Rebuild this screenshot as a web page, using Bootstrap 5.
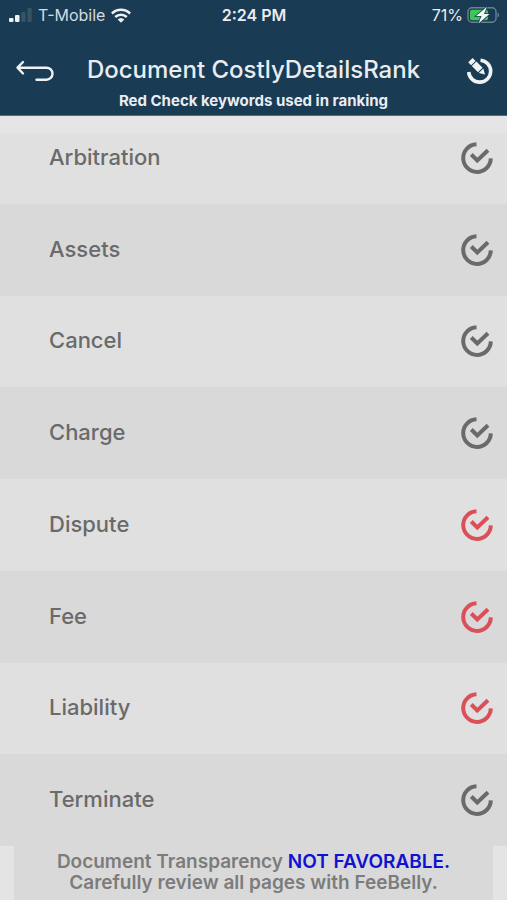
<!DOCTYPE html>
<html lang="en">
<head>
<meta charset="utf-8">
<meta name="viewport" content="width=device-width, initial-scale=1">
<title>Document CostlyDetailsRank</title>
<link href="https://cdn.jsdelivr.net/npm/bootstrap@5.3.0/dist/css/bootstrap.min.css" rel="stylesheet">
<style>
  body { font-family: Inter, "Liberation Sans", sans-serif; background: #e4e4e4; color: #6a6a6a; }
  svg { display: block; flex: none; }
  .app-header { background: #193b53; color: #e9edf1; z-index: 2; border-bottom: 1px solid #536d80; }
  .status-bar { font-size: 16px; line-height: 20px; padding: 5px 8px 0 9px; }
  .status-bar > * { flex: 1 1 0; }
  .carrier { gap: 6px; color: #d3dbe2; }
  .title-bar { padding: 28px 14px 4px; }
  .title-bar h1 { font-size: 24px; line-height: 34px; font-weight: 500; }
  .tool-btn { color: inherit; border: 0; padding: 0; background: none; width: 42px; }
  .title-bar p { font-size: 15px; line-height: 20px; font-weight: 700; padding-top: 4px; }
  .keyword-list { margin-top: -4px; background: linear-gradient(#e7e7e9, #e4e4e5 20px, #e0e0e0 24px, #e0e0e0); }
  .keyword { flex: 1 1 0; padding: 0 13px 0 49px; font-size: 22px; line-height: 30px; font-weight: 500; }
  .keyword span { padding-bottom: 2px; }
  .keyword:nth-child(even) { background: #d9d9d9; }
  .keyword svg { color: #6a6a6a; }
  .keyword input:checked + svg { color: #db5058; }
  .keyword input:focus-visible + svg { outline: 2px solid #193b53; }
  .verdict { background: #d9d9d9; margin: 0 14px; padding: 5px 8px 7px; font-size: 19px; line-height: 21px; font-weight: 600; color: #7c7c7c; }
  .verdict strong { font-weight: 600; color: #1111d0; }
</style>
</head>
<body>
<svg class="d-none" aria-hidden="true">
  <symbol id="check-ring" viewBox="0 0 34 34">
    <path d="M16.5 3.3A13.8 13.8 0 1 0 30.8 17.4" fill="none" stroke="currentColor" stroke-width="4"/>
    <path d="M11.3 13.5l6 6L28 9.3" fill="none" stroke="currentColor" stroke-width="4"/>
  </symbol>
</svg>
<div class="d-flex flex-column min-vh-100">
  <header class="app-header position-relative">
    <div class="status-bar d-flex align-items-center">
      <div class="carrier d-flex align-items-center">
        <svg width="23" height="16" viewBox="0 0 23 16" aria-hidden="true">
          <rect x="0" y="11" width="4.5" height="4" rx="1" fill="#eef1f3"/>
          <rect x="6" y="8" width="4.5" height="7" rx="1" fill="#eef1f3"/>
          <rect x="12.3" y="5" width="4.3" height="10" rx="1" fill="#355567"/>
          <rect x="18.4" y="1" width="4.3" height="14" rx="1" fill="#355567"/>
        </svg>
        <span>T-Mobile</span>
        <svg width="20" height="15" viewBox="0 0 20 15" fill="none" stroke="#eef1f3" stroke-width="2.5" aria-hidden="true">
          <path d="M.9 5.5a13 13 0 0 1 18.2 0M4.2 9a8.4 8.4 0 0 1 11.6 0"/>
          <path d="M6.7 11.4a4.9 4.9 0 0 1 6.6 0L10 14.7z" fill="#eef1f3" stroke="none"/>
        </svg>
      </div>
      <div class="text-center fw-semibold">2:24 PM</div>
      <div class="d-flex align-items-center justify-content-end gap-1">
        <span>71%</span>
        <svg width="32" height="18" viewBox="0 0 32 18" aria-hidden="true">
          <rect x="1" y="1.7" width="28" height="14.6" rx="4" fill="none" stroke="#6c8190" stroke-width="1.4"/>
          <path d="M30.500 6.500c2 .8 2 4.200 0 5z" fill="#6c8190"/>
          <rect x="3" y="3.700" width="18" height="10.600" rx="2" fill="#3fc45a"/>
          <path d="M20 .8L9 10h5.500L11.500 17.500 22.500 8H17z" fill="#f3f6f6" stroke="#193b53" stroke-width="1.500" paint-order="stroke"/>
        </svg>
      </div>
    </div>
    <div class="title-bar">
      <div class="d-flex align-items-center justify-content-between">
        <button class="tool-btn" type="button" aria-label="Back">
          <svg width="42" height="24" viewBox="0 0 42 24" fill="none" stroke="#f0f2f4" stroke-width="2.400" stroke-linecap="round" stroke-linejoin="round">
            <path d="M9 4L3.500 9.700 9 15.500M4 9.700h28.500a5.700 5.700 0 0 1 0 12H22.500"/>
          </svg>
        </button>
        <h1 class="m-0 text-nowrap">Document CostlyDetailsRank</h1>
        <button class="tool-btn d-flex justify-content-end" type="button" aria-label="Edit keywords">
          <svg width="27" height="28" viewBox="0 0 27 28">
            <path d="M14.500 4.200A11 11 0 1 1 2.700 16" fill="none" stroke="#f0f2f4" stroke-width="3.600"/>
            <path d="M2.200 6.300L6.600 2l3 3-4.500 4.300zM5.800 10l4.600-4.500 6.200 6.200-4.600 4.500zM12.800 16.900l4.500-4.300 1.700 6z" fill="#f0f2f4"/>
          </svg>
        </button>
      </div>
      <p class="m-0 text-center">Red Check keywords used in ranking</p>
    </div>
  </header>
  <main class="keyword-list flex-grow-1 d-flex flex-column">
    <label class="keyword d-flex align-items-center justify-content-between"><span>Arbitration</span><input class="visually-hidden" type="checkbox"><svg width="34" height="34"><use href="#check-ring"/></svg></label>
    <label class="keyword d-flex align-items-center justify-content-between"><span>Assets</span><input class="visually-hidden" type="checkbox"><svg width="34" height="34"><use href="#check-ring"/></svg></label>
    <label class="keyword d-flex align-items-center justify-content-between"><span>Cancel</span><input class="visually-hidden" type="checkbox"><svg width="34" height="34"><use href="#check-ring"/></svg></label>
    <label class="keyword d-flex align-items-center justify-content-between"><span>Charge</span><input class="visually-hidden" type="checkbox"><svg width="34" height="34"><use href="#check-ring"/></svg></label>
    <label class="keyword d-flex align-items-center justify-content-between"><span>Dispute</span><input class="visually-hidden" type="checkbox" checked><svg width="34" height="34"><use href="#check-ring"/></svg></label>
    <label class="keyword d-flex align-items-center justify-content-between"><span>Fee</span><input class="visually-hidden" type="checkbox" checked><svg width="34" height="34"><use href="#check-ring"/></svg></label>
    <label class="keyword d-flex align-items-center justify-content-between"><span>Liability</span><input class="visually-hidden" type="checkbox" checked><svg width="34" height="34"><use href="#check-ring"/></svg></label>
    <label class="keyword d-flex align-items-center justify-content-between"><span>Terminate</span><input class="visually-hidden" type="checkbox"><svg width="34" height="34"><use href="#check-ring"/></svg></label>
  </main>
  <footer class="verdict text-center">
    <p class="m-0">Document Transparency <strong>NOT FAVORABLE.</strong><br>Carefully review all pages with FeeBelly.</p>
  </footer>
</div>
<script src="https://cdn.jsdelivr.net/npm/bootstrap@5.3.0/dist/js/bootstrap.bundle.min.js"></script>
</body>
</html>
